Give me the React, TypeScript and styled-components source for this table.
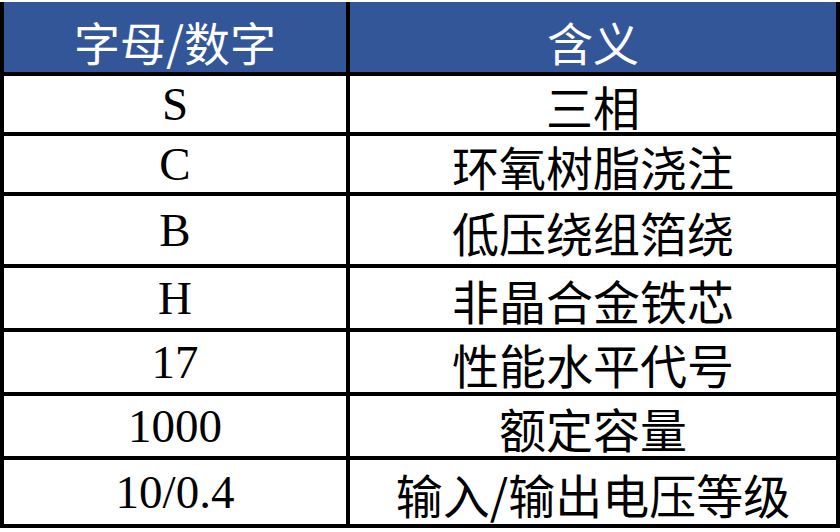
import React from "react";
import styled, { createGlobalStyle } from "styled-components";

const GlobalStyle = createGlobalStyle`
  html, body {
    margin: 0;
    padding: 0;
    background: #ffffff;
  }
  body {
    width: 840px;
    height: 532px;
    overflow: hidden;
    font-family: "Liberation Serif", "Noto Sans CJK SC", serif;
  }
`;

const Page = styled.div`
  padding-top: 2px;
`;

const Table = styled.div`
  display: grid;
  grid-template-columns: 342px 486px;
  grid-template-rows: 70px 56px 56px 68px 60px 60px 60px 64px;
  gap: 4px;
  padding: 0 4px 4px 4px;
  background: #000000;
  width: 840px;
  box-sizing: border-box;
`;

const HeadCell = styled.div`
  background: #335699;
  color: #ffffff;
  display: flex;
  align-items: center;
  justify-content: center;
  padding-top: 7px;
  box-sizing: border-box;
  font-family: "Noto Sans CJK SC", sans-serif;
  font-size: 46px;
  font-weight: 400;
  line-height: 1;
`;

const Cell = styled.div<{ $cjk?: boolean }>`
  background: #ffffff;
  color: #000000;
  display: flex;
  align-items: center;
  justify-content: center;
  font-family: ${(p) =>
    p.$cjk
      ? `"Noto Sans CJK SC", sans-serif`
      : `"Liberation Serif", "Noto Sans CJK SC", serif`};
  font-size: 47px;
  font-weight: 400;
  line-height: 1;
  padding-top: ${(p) => (p.$cjk ? "3px" : "0")};
  box-sizing: border-box;
`;

const rows: [string, string][] = [
  ["S", "三相"],
  ["C", "环氧树脂浇注"],
  ["B", "低压绕组箔绕"],
  ["H", "非晶合金铁芯"],
  ["17", "性能水平代号"],
  ["1000", "额定容量"],
  ["10/0.4", "输入/输出电压等级"],
];

export default function App() {
  return (
    <>
      <GlobalStyle />
      <Page>
        <Table>
          <HeadCell>字母/数字</HeadCell>
          <HeadCell>含义</HeadCell>
          {rows.map(([code, meaning]) => (
            <React.Fragment key={code}>
              <Cell>{code}</Cell>
              <Cell $cjk>{meaning}</Cell>
            </React.Fragment>
          ))}
        </Table>
      </Page>
    </>
  );
}
